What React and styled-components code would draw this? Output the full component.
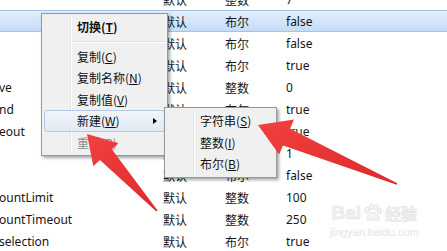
import React from 'react';
import styled, { createGlobalStyle, css } from 'styled-components';

const Global = createGlobalStyle`
  html, body { margin: 0; padding: 0; background: #fff; }
  body {
    width: 447px; height: 251px; overflow: hidden;
    font-family: "Noto Sans", "Noto Sans CJK SC", sans-serif;
  }
`;

const Screen = styled.div`
  position: relative;
  width: 447px;
  height: 251px;
  overflow: hidden;
  background: #fff;
  font-size: 12px;
  color: #161616;
`;

const List = styled.div`
  display: flex;
  flex-direction: column;
  margin-top: -12px;
`;

const Row = styled.div`
  display: grid;
  grid-template-columns: 163px 62px 61px 1fr;
  height: 22px;
  align-items: center;
  box-sizing: border-box;
  ${p => p.$selected && css`
    background: linear-gradient(#e1eefc, #c5dcf6);
    border-top: 1px solid #a6c3e3;
    border-bottom: 1px solid #a6c3e3;
  `}
`;

const Cell = styled.span`
  white-space: nowrap;
  overflow: hidden;
  font-family: ${p => (p.$cjk ? '"Noto Sans CJK SC", sans-serif' : '"Noto Sans", "Noto Sans CJK SC", sans-serif')};
  margin-left: ${p => p.$shift || 0}px;
`;

const Menu = styled.div`
  position: absolute;
  left: ${p => p.$x}px;
  top: ${p => p.$y}px;
  width: ${p => p.$w}px;
  box-sizing: border-box;
  border: 1px solid #979797;
  background: #f0f0f0;
  padding: 2px;
  box-shadow: 2px 2px 3px rgba(0, 0, 0, 0.35);
  font-family: "Noto Sans CJK SC", sans-serif;
  font-size: 12px;
  color: #111;
  &::before {
    content: '';
    position: absolute;
    left: 28px;
    top: 2px;
    bottom: 2px;
    width: 1px;
    background: #e2e3e3;
    border-right: 1px solid #fff;
  }
`;

const Item = styled.div`
  position: relative;
  display: flex;
  align-items: center;
  height: 21.5px;
  box-sizing: border-box;
  padding-left: ${p => p.$pad}px;
  font-weight: ${p => (p.$bold ? 700 : 400)};
  color: ${p => (p.$disabled ? '#8e8e8e' : 'inherit')};
  border: 1px solid transparent;
  border-radius: 3px;
  ${p => p.$hot && css`
    background: linear-gradient(#f1f5fb, #e2eaf5);
    border-color: #b3c9e6;
  `}
  u { text-decoration: underline; text-underline-offset: 1px; }
`;

const Caret = styled.span`
  margin-left: auto;
  margin-right: 7px;
  width: 0;
  height: 0;
  border-top: 3.5px solid transparent;
  border-bottom: 3.5px solid transparent;
  border-left: 4px solid #000;
`;

const Separator = styled.div`
  margin: 3px 0 3px 27px;
  border-top: 1px solid #e0e0e0;
  border-bottom: 1px solid #fff;
`;

const Overlay = styled.svg`
  position: absolute;
  left: 0;
  top: 0;
  pointer-events: none;
`;

const Watermark = styled.div`
  position: absolute;
  left: 330px;
  top: 203px;
  display: flex;
  flex-direction: column;
  align-items: center;
  color: #f2f2f2;
  pointer-events: none;
`;

const MarkTop = styled.div`
  display: flex;
  align-items: center;
  gap: 2px;
  font-family: "Liberation Sans", sans-serif;
  font-weight: 700;
  font-size: 19px;
  line-height: 20px;
  -webkit-text-stroke: 0.6px #e2e2e2;
  span.cjk { font-family: "Noto Sans CJK SC", sans-serif; font-size: 16px; }
`;

const MarkUrl = styled.div`
  font-family: "Liberation Sans", sans-serif;
  font-size: 11px;
  line-height: 14px;
  margin-top: 2px;
  color: #ebebeb;
  -webkit-text-stroke: 0.2px #e4e4e4;
`;

const rows = [
  { name: '', kind: '默认', type: '整数', value: '7' },
  { name: '', kind: '默认', type: '布尔', value: 'false', selected: true },
  { name: '', kind: '默认', type: '布尔', value: 'false' },
  { name: '', kind: '默认', type: '布尔', value: 'true' },
  { name: 've', kind: '默认', type: '整数', value: '0' },
  { name: 'nd', kind: '默认', type: '布尔', value: 'true' },
  { name: 'eout', kind: '默认', type: '布尔', value: 'true' },
  { name: '', kind: '默认', type: '整数', value: '1' },
  { name: '', kind: '默认', type: '布尔', value: 'false' },
  { name: 'ountLimit', kind: '默认', type: '整数', value: '100' },
  { name: 'ountTimeout', kind: '默认', type: '整数', value: '250' },
  { name: 'selection', kind: '默认', type: '布尔', value: 'true' },
];

function arrowPoints(tip, tail, headLen, headHalf, shaftHalf, tailHalf) {
  const dx = tail[0] - tip[0];
  const dy = tail[1] - tip[1];
  const len = Math.hypot(dx, dy);
  const ux = dx / len, uy = dy / len;
  const nx = -uy, ny = ux;
  const bx = tip[0] + ux * headLen, by = tip[1] + uy * headLen;
  const pts = [
    tip,
    [bx + nx * headHalf, by + ny * headHalf],
    [bx + nx * shaftHalf, by + ny * shaftHalf],
    [tail[0] + nx * tailHalf, tail[1] + ny * tailHalf],
    [tail[0] - nx * tailHalf, tail[1] - ny * tailHalf],
    [bx - nx * shaftHalf, by - ny * shaftHalf],
    [bx - nx * headHalf, by - ny * headHalf],
  ];
  return pts.map(p => p.map(v => v.toFixed(1)).join(',')).join(' ');
}

export default function App() {
  return (
    <>
      <Global />
      <Screen>
        <List>
          {rows.map((r, i) => (
            <Row key={i} $selected={r.selected}>
              <Cell $shift={-1}>{r.name}</Cell>
              <Cell $cjk>{r.kind}</Cell>
              <Cell $cjk>{r.type}</Cell>
              <Cell>{r.value}</Cell>
            </Row>
          ))}
        </List>

        <Menu $x={41} $y={13} $w={127}>
          <Item $pad={32} $bold>切换(<u>T</u>)</Item>
          <Separator />
          <Item $pad={32}>复制(<u>C</u>)</Item>
          <Item $pad={32}>复制名称(<u>N</u>)</Item>
          <Item $pad={32}>复制值(<u>V</u>)</Item>
          <Item $pad={32} $hot>新建(<u>W</u>)<Caret /></Item>
          <Item $pad={32} $disabled>重置(<u>R</u>)</Item>
        </Menu>

        <Menu $x={164} $y={107} $w={113}>
          <Item $pad={32}>字符串(<u>S</u>)</Item>
          <Item $pad={32}>整数(<u>I</u>)</Item>
          <Item $pad={32}>布尔(<u>B</u>)</Item>
        </Menu>

        <Watermark>
          <MarkTop>
            <span>Bai</span>
            <svg width="20" height="18" viewBox="0 0 20 18">
              <g fill="#f4f4f4" stroke="#e0e0e0" strokeWidth="0.8">
                <ellipse cx="4" cy="6" rx="2.3" ry="3" />
                <ellipse cx="8.5" cy="3" rx="2.3" ry="2.8" />
                <ellipse cx="13" cy="3.5" rx="2.3" ry="2.8" />
                <ellipse cx="16.5" cy="7" rx="2.2" ry="2.8" />
                <path d="M4 16 C4 11 7 8.5 10 8.5 C13 8.5 16 11 16 16 Z" />
              </g>
            </svg>
            <span className="cjk">经验</span>
          </MarkTop>
          <MarkUrl>jingyan.baidu.com</MarkUrl>
        </Watermark>

        <Overlay width="447" height="251" viewBox="0 0 447 251">
          <defs>
            <linearGradient id="red" x1="0" y1="0" x2="1" y2="1">
              <stop offset="0" stopColor="#f2403f" />
              <stop offset="1" stopColor="#dd2a2c" />
            </linearGradient>
          </defs>
          <polygon points={arrowPoints([87, 134], [157, 211], 28, 17, 8, 0.8)} fill="url(#red)" />
          <polygon points={arrowPoints([258, 125], [397, 184], 31, 19, 9, 0.8)} fill="url(#red)" />
        </Overlay>
      </Screen>
    </>
  );
}
